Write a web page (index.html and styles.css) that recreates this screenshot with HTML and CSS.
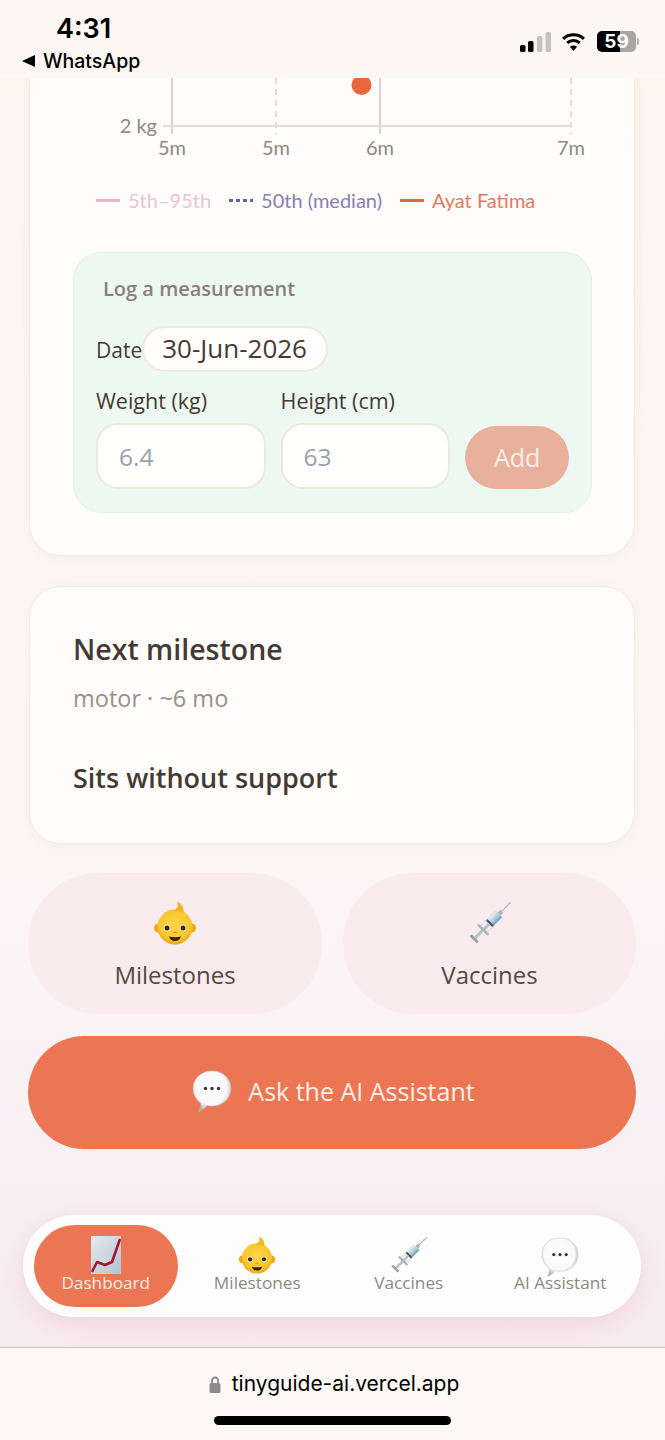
FILE: index.html
```html
<!DOCTYPE html>
<html lang="en">
<head>
    <meta charset="UTF-8">
    <meta name="viewport" content="width=device-width, initial-scale=1.0">
    <title>TinyGuide</title>
    <link rel="stylesheet" href="styles.css">
</head>
<body>

<!-- Emoji drawings, reused below -->
<svg class="defs" width="0" height="0">
    <defs>
        <radialGradient id="bubbleFill" cx=".48" cy=".42" r=".58">
            <stop offset="0" stop-color="#ffffff"/>
            <stop offset=".72" stop-color="#f9f9f9"/>
            <stop offset="1" stop-color="#a9afb1"/>
        </radialGradient>
        <linearGradient id="chartFill" x1="0" y1="0" x2="1" y2="1">
            <stop offset="0" stop-color="#e6ebef"/>
            <stop offset="1" stop-color="#b2c2d0"/>
        </linearGradient>
        <radialGradient id="babyFill" cx=".5" cy=".42" r=".6">
            <stop offset="0" stop-color="#fdd64a"/>
            <stop offset=".75" stop-color="#fbc52c"/>
            <stop offset="1" stop-color="#ee9d10"/>
        </radialGradient>
        <linearGradient id="tubeFill" x1="0" y1="0" x2="1" y2="0">
            <stop offset="0" stop-color="#e6eef2"/>
            <stop offset=".6" stop-color="#a9c9dc"/>
            <stop offset="1" stop-color="#6f9db8"/>
        </linearGradient>
    </defs>
    <symbol id="baby" viewBox="0 0 44 44">
        <circle cx="5.500" cy="27" r="4.500" fill="#f0a616"/>
        <circle cx="38.500" cy="27" r="4.500" fill="#f0a616"/>
        <circle cx="22" cy="26" r="17.500" fill="url(#babyFill)"/>
        <path d="M19 9.500C23 9 26.500 6 24 1c4 1 7 4.500 6.500 10.500z" fill="#f6b51f"/>
        <circle cx="14" cy="27" r="3.400" fill="#fff3c4"/>
        <circle cx="30" cy="27" r="3.400" fill="#fff3c4"/>
        <circle cx="14" cy="27" r="2.500" fill="#33240f"/>
        <circle cx="30" cy="27" r="2.500" fill="#33240f"/>
        <path d="M20.300 31.500h3.400" stroke="#d98c10" stroke-width="1.200" fill="none"/>
        <path d="M16 35.500c4 .9 8 .9 12 0-.8 3-3.200 4.500-6 4.500s-5.200-1.500-6-4.500z" fill="#33240f"/>
    </symbol>
    <symbol id="syringe" viewBox="0 0 40 42">
        <g transform="rotate(45 20 21)">
            <rect x="19.500" y="-7" width="1" height="16" fill="#aab1b6"/>
            <rect x="18" y="5" width="4" height="4" fill="#a9b8c1"/>
            <rect x="15.500" y="9" width="9" height="20" rx="1" fill="#eef2f4" stroke="#b2bec5" stroke-width=".5"/>
            <rect x="15.800" y="9" width="8.400" height="11" fill="url(#tubeFill)"/>
            <rect x="15.800" y="20" width="8.400" height="2.200" fill="#4a5055"/>
            <rect x="18.500" y="22" width="3" height="19" fill="#bcc3c8"/>
            <rect x="13" y="29" width="14" height="2.400" rx="1" fill="#adb5ba"/>
            <rect x="15" y="41" width="10" height="2.800" rx="1" fill="#9ba3a8"/>
        </g>
    </symbol>
    <symbol id="bubble" viewBox="0 0 40 42">
        <path d="M20 1C31 1 39 8.500 39 18.500S31 36 20 36c-1.800 0-3.500-.2-5-.6C13 38 10 40.500 6.500 41.500 8.200 39 9 36.300 8.800 33 4 29.700 1 24.500 1 18.500 1 8.500 9 1 20 1z" fill="url(#bubbleFill)" stroke="#c0c4c6" stroke-width=".5"/>
        <circle cx="13.500" cy="18.500" r="1.700" fill="#34383b"/>
        <circle cx="20" cy="18.500" r="1.700" fill="#34383b"/>
        <circle cx="26.500" cy="18.500" r="1.700" fill="#34383b"/>
    </symbol>
    <symbol id="graph" viewBox="0 0 34 38">
        <rect x="2" y="0" width="30" height="38" fill="url(#chartFill)"/>
        <path d="M3 36 8 26 16 29 23 26 31 3" stroke="#a5182a" stroke-width="2.600" fill="none" stroke-linejoin="round"/>
    </symbol>
</svg>

<!-- Phone status bar -->
<header class="status-bar">
    <div class="status-left">
        <div class="clock">4:31</div>
        <div class="back-app"><span class="back-arrow"></span>WhatsApp</div>
    </div>
    <div class="status-right">
        <svg class="signal" width="32" height="20" viewBox="0 0 32 20">
            <rect x="0" y="13" width="5.500" height="7" rx="1.500" fill="#000"/>
            <rect x="8" y="9" width="5.500" height="11" rx="1.500" fill="#000"/>
            <rect x="17" y="4" width="5.500" height="16" rx="1.500" fill="#c6c4c1"/>
            <rect x="25.500" y="0" width="5.500" height="20" rx="1.500" fill="#c6c4c1"/>
        </svg>
        <svg class="wifi" width="27" height="19" viewBox="0 0 27 21">
            <path d="M2 7.500C8.500 1.500 18.500 1.500 25 7.500" stroke="#000" stroke-width="3.400" fill="none"/>
            <path d="M6.500 12C10.500 8.500 16.500 8.500 20.500 12" stroke="#000" stroke-width="3.400" fill="none"/>
            <path d="M13.500 21 9.500 16.300C12 14.500 15 14.500 17.500 16.300z" fill="#000"/>
        </svg>
        <div class="battery">59</div>
        <span class="battery-tip"></span>
    </div>
</header>

<main class="page">

    <!-- Growth chart card, scrolled partly out of view -->
    <section class="card growth-card">
        <svg class="chart" width="605" height="90" viewBox="30 78 605 90">
            <g stroke="#e6dcd5" stroke-width="2" fill="none">
                <path d="M172 78V134M380 78V134" stroke="#dcd3cd"/>
                <path d="M276 78V134M571 78V134" stroke-dasharray="6 5"/>
                <path d="M163 126H571"/>
            </g>
            <circle cx="361.500" cy="85" r="10" fill="#e8673c"/>
            <g class="chart-label">
                <text x="157" y="133" text-anchor="end">2 kg</text>
                <text x="172" y="155" text-anchor="middle">5m</text>
                <text x="276" y="155" text-anchor="middle">5m</text>
                <text x="380" y="155" text-anchor="middle">6m</text>
                <text x="571" y="155" text-anchor="middle">7m</text>
            </g>
        </svg>
        <div class="legend">
            <span class="legend-item range"><i></i>5th–95th</span>
            <span class="legend-item median"><i></i>50th (median)</span>
            <span class="legend-item child"><i></i>Ayat Fatima</span>
        </div>

        <form class="log-box">
            <h3>Log a measurement</h3>
            <div class="date-row">
                <label for="dateInput">Date</label>
                <input class="date-input" id="dateInput" type="text" value="30-Jun-2026">
            </div>
            <div class="fields-row">
                <div class="field">
                    <label for="weightInput">Weight (kg)</label>
                    <input id="weightInput" type="text" placeholder="6.4">
                </div>
                <div class="field">
                    <label for="heightInput">Height (cm)</label>
                    <input id="heightInput" type="text" placeholder="63">
                </div>
                <button class="add-btn" type="button">Add</button>
            </div>
        </form>
    </section>

    <!-- Next milestone -->
    <section class="card next-card">
        <h2>Next milestone</h2>
        <p class="next-meta">motor · ~6 mo</p>
        <p class="next-title">Sits without support</p>
    </section>

    <!-- Shortcuts -->
    <div class="tiles">
        <a class="tile">
            <svg class="tile-icon" width="44" height="44"><use href="#baby"/></svg>
            Milestones
        </a>
        <a class="tile">
            <svg class="tile-icon" width="44" height="44"><use href="#syringe"/></svg>
            Vaccines
        </a>
    </div>
    <a class="ask-btn">
        <svg width="40" height="42"><use href="#bubble"/></svg>
        Ask the AI Assistant
    </a>

    <!-- Bottom navigation -->
    <nav class="tab-bar">
        <a class="tab active">
            <svg width="34" height="38"><use href="#graph"/></svg>
            Dashboard
        </a>
        <a class="tab">
            <svg width="38" height="38"><use href="#baby"/></svg>
            Milestones
        </a>
        <a class="tab">
            <svg width="36" height="38"><use href="#syringe"/></svg>
            Vaccines
        </a>
        <a class="tab">
            <svg width="40" height="40" class="tab-bubble"><use href="#bubble"/></svg>
            AI Assistant
        </a>
    </nav>
</main>

<!-- Browser address bar -->
<footer class="address-bar">
    <div class="address">
        <svg width="12" height="17" viewBox="0 0 12 17">
            <path d="M3 8V4.500a3 3 0 0 1 6 0V8" stroke="#8c8c8c" stroke-width="1.800" fill="none"/>
            <rect x="0.500" y="7" width="11" height="10" rx="1.500" fill="#8c8c8c"/>
        </svg>
        tinyguide-ai.vercel.app
    </div>
    <div class="home-indicator"></div>
</footer>

</body>
</html>
```

FILE: styles.css
```css
* {
    box-sizing: border-box;
}

body {
    margin: 0;
    height: 1440px;
    display: flex;
    flex-direction: column;
    overflow: hidden;
    font-family: "Open Sans", Lato, sans-serif;
    color: #453a33;
    background: #fdf9f5;
}

.defs {
    position: absolute;
}

h2,
h3,
p {
    margin: 0;
}

svg {
    display: block;
    flex: none;
}

/* Status bar */
.status-bar {
    height: 78px;
    flex: none;
    display: flex;
    justify-content: space-between;
    padding: 15px 26px 0 22px;
    background: #fcf7f2;
    font-family: Inter, Roboto, sans-serif;
    color: #000;
}

.clock {
    margin-left: 34px;
    font-size: 27px;
    line-height: 27px;
    font-weight: 600;
}

.back-app {
    display: flex;
    align-items: center;
    gap: 8px;
    margin-top: 6px;
    font-size: 19.500px;
    line-height: 26px;
    font-weight: 500;
}

.back-arrow {
    width: 0;
    height: 0;
    border-top: 6px solid transparent;
    border-bottom: 6px solid transparent;
    border-right: 13px solid #000;
}

.status-right {
    display: flex;
    align-items: center;
    height: 21px;
    margin-top: 16px;
}

.signal {
    margin-right: 8px;
}

.wifi {
    margin-right: 10px;
}

.battery {
    width: 39px;
    height: 21px;
    border-radius: 5px;
    background: linear-gradient(90deg, #000 58%, #a8a6a3 58%);
    color: #fff;
    font-size: 19px;
    font-weight: 700;
    line-height: 21px;
    text-align: center;
}

.battery-tip {
    width: 2px;
    height: 7px;
    margin-left: 1px;
    border-radius: 0 2px 2px 0;
    background: #b3b1ae;
}

/* Page */
.page {
    flex: 1;
    padding: 0 24px 0 23px;
    background: linear-gradient(180deg, #fdf4ee 0%, #fbf6f4 45%, #f9f3f6 75%, #f8ebf0 100%);
    overflow: hidden;
}

.card {
    margin: 0 6px;
    background: #fefdfc;
    border: 1px solid #f5ebe5;
    border-radius: 32px;
    box-shadow: 0 2px 10px rgba(190, 140, 120, .07);
}

.growth-card {
    height: 478px;
    padding: 0 42px 0 43px;
    border-top: none;
    border-radius: 0 0 32px 32px;
}

.chart {
    margin-left: -43px;
}

.chart-label {
    font-family: Lato, sans-serif;
    font-size: 20px;
    fill: #8f8880;
}

.legend {
    display: flex;
    margin: 20px 0 0 23px;
    font-family: Lato, sans-serif;
    font-size: 20px;
    line-height: 24px;
}

.legend-item {
    display: flex;
    align-items: center;
    gap: 8px;
    margin-right: 18px;
}

.legend-item i {
    width: 24px;
    height: 3px;
}

.range {
    color: #ebc3d2;
}

.range i {
    background: #eeb4c8;
}

.median {
    color: #8a7eb3;
}

.median i {
    background: repeating-linear-gradient(90deg, #6a5ea0 0 4px, transparent 4px 7px);
}

.child {
    color: #e4795c;
}

.child i {
    background: #e5673f;
}

.log-box {
    height: 261px;
    margin-top: 40px;
    padding: 0 22px;
    background: #eef8f3;
    border: 1px solid #e6efea;
    border-radius: 28px;
}

.log-box h3 {
    margin: 22px 0 0 7px;
    font-size: 20px;
    line-height: 28px;
    font-weight: 600;
    color: #8a7f76;
}

.date-row {
    display: flex;
    align-items: center;
    margin-top: 23px;
    font-size: 21px;
}

.date-row label {
    padding-top: 2px;
}

.date-input {
    width: 186px;
    height: 46px;
    padding: 0 18px 2px;
    background: #fffefd;
    border: 2px solid #f0e8e2;
    border-radius: 24px;
    font-family: inherit;
    font-size: 26px;
    color: #453a33;
    outline: none;
}

.fields-row {
    display: flex;
    align-items: flex-end;
    gap: 15px;
    margin-top: 15px;
}

.field {
    width: 170px;
    font-size: 21.500px;
}

.field label {
    display: block;
    line-height: 28px;
    margin-bottom: 8px;
    white-space: nowrap;
}

.field input {
    display: block;
    width: 100%;
    height: 66px;
    padding: 0 21px;
    background: #fefefd;
    border: 2px solid #ece8e2;
    border-radius: 22px;
    font-family: inherit;
    font-size: 24.500px;
    outline: none;
}

.field input::placeholder {
    color: #9aa1aa;
    opacity: 1;
}

.add-btn {
    width: 104px;
    height: 63px;
    padding: 0 0 2px;
    border: none;
    border-radius: 32px;
    background: #e9b09c;
    color: #fbeee6;
    font-family: inherit;
    font-size: 25px;
}

.next-card {
    height: 258px;
    margin-top: 30px;
    padding: 42px 42px 0 43px;
}

.next-card h2 {
    font-size: 28.500px;
    line-height: 40px;
    font-weight: 600;
}

.next-meta {
    margin-top: 14px;
    font-size: 23.500px;
    line-height: 30px;
    color: #9a9088;
}

.next-title {
    margin-top: 47px;
    font-size: 27px;
    line-height: 36px;
    font-weight: 600;
}

.tiles {
    display: grid;
    grid-template-columns: 294px 293px;
    gap: 21px;
    margin: 29px 5px 0;
}

.tile {
    height: 141px;
    display: flex;
    flex-direction: column;
    align-items: center;
    padding-top: 28px;
    background: #faecee;
    border-radius: 70px;
    font-size: 24px;
    line-height: 34px;
    color: #56493f;
}

.tile-icon {
    margin-bottom: 13px;
}

.ask-btn {
    height: 113px;
    display: flex;
    align-items: center;
    justify-content: center;
    gap: 16px;
    margin: 22px 5px 0;
    padding: 0 0 3px 3px;
    background: #ec7653;
    border-radius: 57px;
    font-size: 25px;
    color: #fdf0e6;
}

.tab-bar {
    height: 102px;
    display: grid;
    grid-template-columns: repeat(4, 151.500px);
    align-items: center;
    margin-top: 66px;
    padding-left: 7px;
    background: #fefdfd;
    border-radius: 51px;
    box-shadow: 0 8px 24px rgba(215, 150, 170, .25);
}

.tab {
    height: 82px;
    width: 144px;
    display: flex;
    flex-direction: column;
    align-items: center;
    padding-top: 11px;
    font-size: 17.200px;
    line-height: 18px;
    color: #8f8880;
    justify-self: center;
    white-space: nowrap;
}

.tab-bubble {
    margin: 1px 0 -3px;
}

.tab.active {
    background: #ec7653;
    border-radius: 41px;
    color: #fdeee4;
}

/* Address bar */
.address-bar {
    height: 93px;
    flex: none;
    border-top: 1px solid #c9c5c6;
    background: #fef9f6;
}

.address {
    display: flex;
    align-items: center;
    justify-content: center;
    gap: 11px;
    margin-top: 22px;
    padding-left: 3px;
    font-family: Inter, Roboto, sans-serif;
    font-size: 21px;
    line-height: 28px;
    color: #000;
}

.home-indicator {
    width: 237px;
    height: 9px;
    margin: 18px 0 0 214px;
    border-radius: 5px;
    background: #000;
}
```
